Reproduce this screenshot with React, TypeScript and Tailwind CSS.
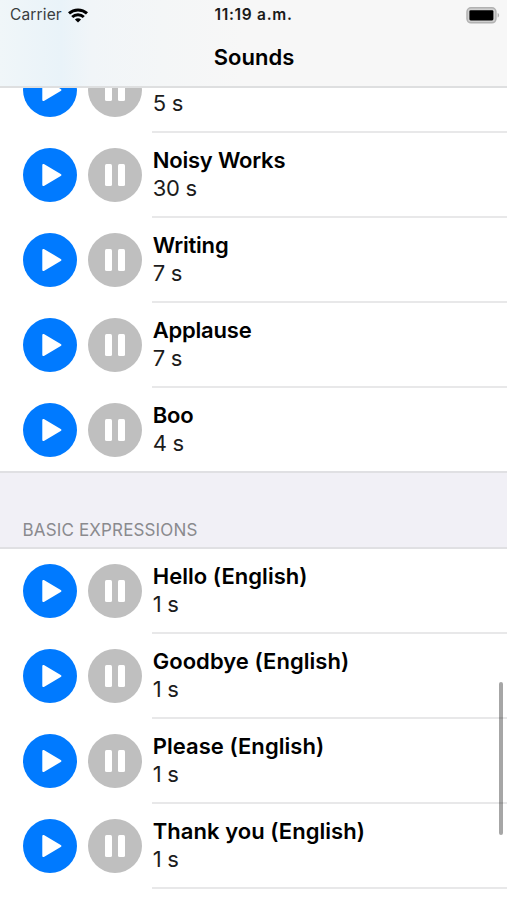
import React from 'react';

type Sound = { name: string; seconds: number };

const effects: Sound[] = [
    { name: 'Boing', seconds: 5 },
    { name: 'Noisy Works', seconds: 30 },
    { name: 'Writing', seconds: 7 },
    { name: 'Applause', seconds: 7 },
    { name: 'Boo', seconds: 4 },
];

const expressions: Sound[] = [
    { name: 'Hello (English)', seconds: 1 },
    { name: 'Goodbye (English)', seconds: 1 },
    { name: 'Please (English)', seconds: 1 },
    { name: 'Thank you (English)', seconds: 1 },
];

function WifiIcon() {
    return (
        <svg width="20" height="15" viewBox="0 0 20 15" fill="none" stroke="#000" strokeWidth="3">
            <path d="M1 5.4C6 .8 14 .8 19 5.4" />
            <path d="M4.2 9C7.400 6 12.600 6 15.800 9" />
            <path d="M10 14.600 6.900 11.500C8.600 9.900 11.400 9.900 13.100 11.500Z" fill="#000" stroke="none" />
        </svg>
    );
}

function BatteryIcon() {
    return (
        <svg width="34" height="17" viewBox="0 0 34 17">
            <rect x="1" y=".8" width="28.9" height="15" rx="4" fill="#d0d0d0" stroke="#b2b2b2" strokeWidth="1.5" />
            <rect x="3.400" y="3.200" width="24" height="10.200" rx="1.300" fill="#000" />
            <path d="M31.6 6v4.5c2-.7 2-3.800 0-4.500Z" fill="#b2b2b2" />
        </svg>
    );
}

function PlayButton() {
    return (
        <button className="mt-[15px] size-[54px] rounded-full bg-[#007aff]">
            <svg width="54" height="54" viewBox="0 0 54 54" fill="#fff">
                <path d="M19.300 17.200c0-1.200 1-1.600 2-1L37.700 25.900c1 .6 1 1.500 0 2.100L21.300 37.800c-1 .6-2 .2-2-1Z" />
            </svg>
        </button>
    );
}

function PauseButton() {
    return (
        <button className="mt-[15px] ml-[11px] size-[54px] rounded-full bg-[#bfbfbf]">
            <svg width="54" height="54" viewBox="0 0 54 54" fill="#fff">
                <rect x="17" y="16" width="7" height="22" rx="1.500" />
                <rect x="30" y="16" width="7" height="22" rx="1.500" />
            </svg>
        </button>
    );
}

function SoundRow({ sound, last }: { sound: Sound; last?: boolean }) {
    return (
        <li className={`flex items-start pl-[22.5px] ${last ? 'h-[83px]' : 'h-[85px]'}`}>
            <PlayButton />
            <PauseButton />
            <div className={`ml-[10.5px] h-full flex-1 border-b-2 pt-[13px] pl-[0.7px] text-[22px] leading-[28px] ${last ? 'border-transparent' : 'border-[#e8e8e9]'}`}>
                <h3 className="font-semibold">{sound.name}</h3>
                <p className="tracking-[-0.3px] text-[#1c1c1c]">{sound.seconds} s</p>
            </div>
        </li>
    );
}

export default function App() {
    return (
        <div className="relative flex h-[900px] w-[507px] flex-col overflow-hidden bg-white font-['Inter',sans-serif] text-black">
            <header className="z-10 h-[88px] shrink-0 border-b-2 border-[#dedfe0] bg-[linear-gradient(90deg,#f0f6f9_0%,#e9f3f9_12%,#f1f5f8_18%,#f4f6f7_32%,#f7f7f7_48%)]">
                <div className="grid h-[30px] grid-cols-3 items-center px-[7px] text-[15.500px]">
                    <div className="flex items-center gap-[6px] pl-[3px] text-[#3a3d3f]">
                        <span className="tracking-[0.15px]">Carrier</span>
                        <WifiIcon />
                    </div>
                    <span className="text-center font-semibold tracking-[0.7px] whitespace-nowrap text-[#1a1a1a]">11:19 a.m.</span>
                    <div className="flex justify-end"><BatteryIcon /></div>
                </div>
                <h1 className="pt-[11px] pl-px text-center text-[22px] leading-[32px] font-semibold">Sounds</h1>
            </header>

            <main className="-mt-[40px]">
                <ul className="tracking-[-0.2px]">
                    {effects.map((sound, i) => (
                        <SoundRow key={sound.name} sound={sound} last={i === effects.length - 1} />
                    ))}
                </ul>
                <h2 className="flex h-[78px] items-end border-y-2 border-[#e0e0e3] bg-[#f1f0f6] pb-[5px] pl-[22.5px] text-[17px] leading-[24px] tracking-[0.15px] text-[#8a8a8e]">
                    BASIC EXPRESSIONS
                </h2>
                <ul className="tracking-[0.05px]">
                    {expressions.map(sound => (
                        <SoundRow key={sound.name} sound={sound} />
                    ))}
                </ul>
            </main>

            {/* scroll indicator */}
            <div className="absolute top-[682px] right-[4px] h-[153px] w-[4px] rounded-full bg-black/35" />
        </div>
    );
}
